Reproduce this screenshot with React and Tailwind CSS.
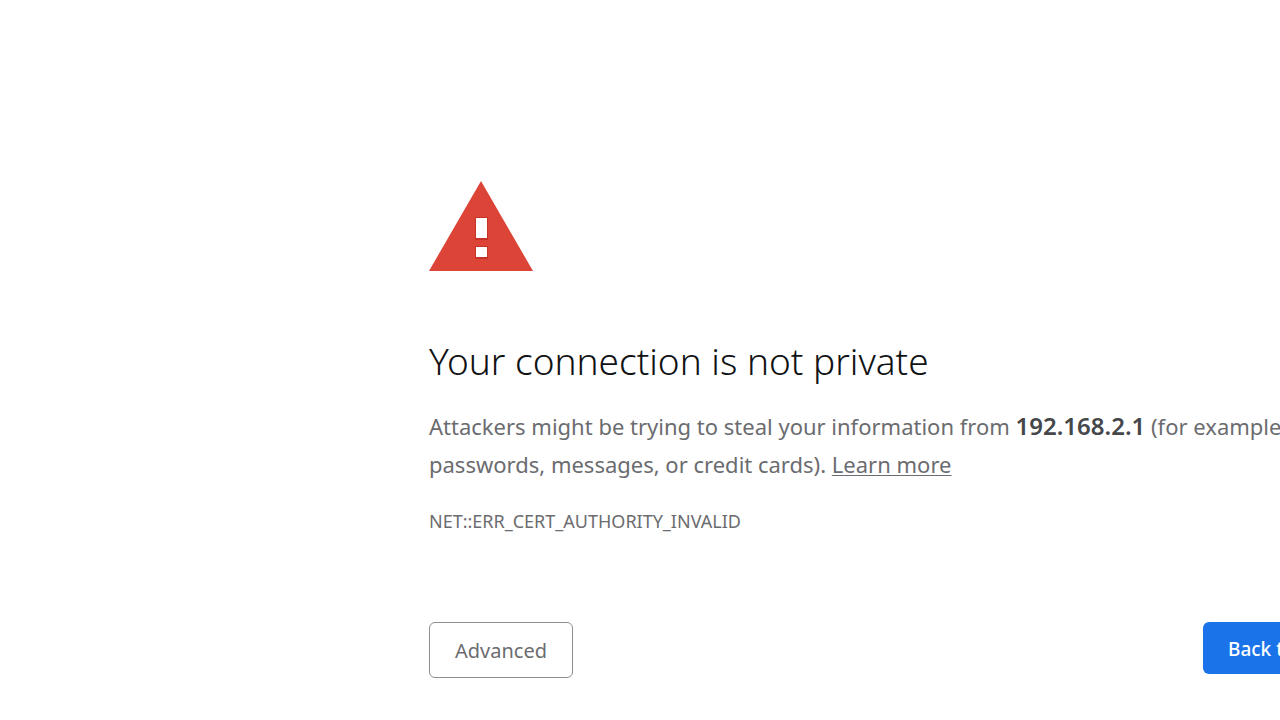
const WarningIcon = () => (
  <svg
    className="block w-[104px] h-[90px]"
    viewBox="0 0 104 90"
    role="img"
    aria-label="Warning"
  >
    <path d="M52 0L104 90H0z" fill="#db4437" />
    <path d="M46 36h13v23H46zM46 65h13v13H46z" fill="#c43325" />
    <path d="M47 37h11v20H47zM47 66h11v10H47z" fill="#fff" />
  </svg>
);

const App = () => {
  return (
    <div className="min-h-screen overflow-hidden bg-white pt-[181px] pl-[429px] font-['Noto_Sans','Open_Sans',sans-serif] text-[#6b6c6f]">
      <main className="w-[960px]">
        <WarningIcon />

        <h1 className="mt-16 text-[37px] leading-[52px] font-light text-[#111214]">
          Your connection is not private
        </h1>

        <p className="mt-5 text-[22px] leading-[38px]">
          Attackers might be trying to steal your information from{" "}
          <strong className="text-[24px] font-semibold text-[#45474b]">192.168.2.1</strong> (for
          example, passwords, messages, or credit cards).{" "}
          <a href="#" className="underline decoration-1 underline-offset-2">
            Learn more
          </a>
        </p>

        <div className="mt-5 text-[18px] leading-[36px]">NET::ERR_CERT_AUTHORITY_INVALID</div>

        <div className="mt-[83px] flex items-start justify-between">
          <button
            type="button"
            className="h-14 w-36 rounded-md border border-[#8d8e91] pt-0.5 text-[20px] leading-[28px]"
          >
            Advanced
          </button>
          <button
            type="button"
            className="h-[52px] w-[186px] rounded-md bg-[#1a73e8] px-[25px] pt-0.5 text-left text-[19px] leading-[28px] font-medium whitespace-nowrap text-white"
          >
            Back to safety
          </button>
        </div>
      </main>
    </div>
  );
};

export default App;
